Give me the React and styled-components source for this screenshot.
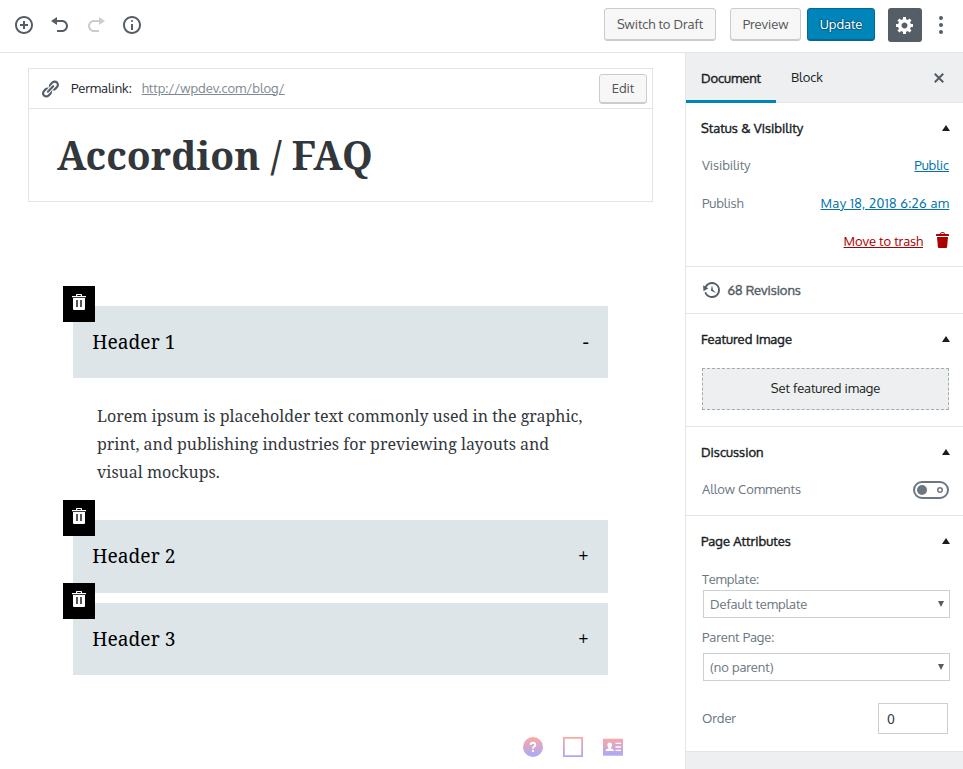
import React from "react";
import styled, { createGlobalStyle, css } from "styled-components";

const sans = `Oxygen, "Noto Sans", sans-serif`;
const serif = `"Noto Serif", "DejaVu Serif Condensed", serif`;

const GlobalStyle = createGlobalStyle`
  *, *::before, *::after { box-sizing: border-box; }
  html, body { margin: 0; padding: 0; background: #fff; }
  body { font-family: ${sans}; font-size: 13px; color: #555d66; letter-spacing: -0.07px; }
  button, input, select { font: inherit; letter-spacing: inherit; color: inherit; margin: 0; }
`;

const mediumText = css`
  font-weight: 400;
  -webkit-text-stroke: 0.4px currentColor;
`;

const Screen = styled.div`
  width: 963px;
  height: 769px;
  display: flex;
  flex-direction: column;
  overflow: hidden;
`;

const TopBar = styled.header`
  flex: none;
  height: 53px;
  border-bottom: 1px solid #e2e4e7;
  display: flex;
  justify-content: space-between;
  padding: 0 12px 0 14px;
`;

const Tools = styled.div`
  display: flex;
  gap: 16px;
  padding-top: 15px;
`;

const Actions = styled.div`
  display: flex;
  align-items: flex-start;
  padding-top: 8px;
`;

const IconButton = styled.button`
  display: flex;
  padding: 0;
  border: 0;
  background: none;
  width: 20px;
  height: 20px;
  color: ${p => (p.$muted ? "#cbced1" : "#555d66")};
`;

const Button = styled.button`
  width: ${p => p.$width}px;
  height: ${p => (p.$small ? 30 : 33)}px;
  margin-right: ${p => p.$gap || 0}px;
  padding: 0 0 2px;
  border-radius: 3px;
  white-space: nowrap;
  font-size: 13px;
  border: 1px solid ${p => (p.$primary ? "#006a95" : "#ccc")};
  background: ${p => (p.$primary ? "#0085ba" : "#f7f7f7")};
  color: ${p => (p.$primary ? "#fff" : "#555")};
  box-shadow: ${p => (p.$primary ? "inset 0 -1px 0 #006a95" : "inset 0 -1px 0 #ccc")};
  text-shadow: ${p => (p.$primary ? "0 -1px 1px #005d82, 1px 0 1px #005d82, 0 1px 1px #005d82, -1px 0 1px #005d82" : "none")};
`;

const SettingsButton = styled.button`
  width: 34px;
  height: 34px;
  margin-right: 9px;
  padding: 0;
  border: 0;
  border-radius: 3px;
  background: #555d66;
  color: #fff;
  display: flex;
  align-items: center;
  justify-content: center;
`;

const MoreButton = styled(IconButton)`
  height: 34px;
  align-items: center;
`;

const Workspace = styled.div`
  flex: 1;
  min-height: 0;
  display: flex;
`;

const Editor = styled.main`
  width: 685px;
  padding: 15px 32px 0 28px;
`;

const Permalink = styled.div`
  display: flex;
  align-items: center;
  height: 41px;
  border: 1px solid #e2e4e7;
  padding: 0 5px 0 11px;
  color: #23282d;
  svg { color: #555d66; margin-right: 11px; }
`;

const PermalinkLabel = styled.span`
  padding-bottom: 1px;
`;

const PermalinkUrl = styled.a`
  margin-left: 10px;
  padding-bottom: 1px;
  flex: 1;
  color: #7e8993;
  text-decoration: underline;
  letter-spacing: -0.04px;
`;

const TitleBox = styled.div`
  height: 93px;
  border: 1px solid #e2e4e7;
  border-top: 0;
  padding: 18px 28px;
`;

const Title = styled.h1`
  margin: 0;
  font: 700 39.06px/55px ${serif};
  letter-spacing: 0;
  color: #32373c;
`;

const Accordion = styled.div`
  margin: 103.85px 45px 0 45px;
  font-family: ${serif};
  letter-spacing: 0;
`;

const Section = styled.section`
  position: relative;
  margin-bottom: 10px;
`;

const SectionHeader = styled.div`
  height: 72.4px;
  padding: 0 19.3px;
  background: #dde5e8;
  color: #000;
  display: flex;
  align-items: center;
  justify-content: space-between;
  font-size: 19.2px;
  line-height: 34.5px;
`;

const RemoveButton = styled.button`
  position: absolute;
  left: -10px;
  top: -20px;
  width: 32px;
  height: 36px;
  padding: 8px 9px;
  border: 0;
  background: #000;
  color: #fff;
  display: flex;
`;

const SectionBody = styled.p`
  margin: 0;
  height: 132px;
  padding: 24px;
  font-size: 16px;
  line-height: 28px;
  color: #32373c;
`;

const Shortcuts = styled.div`
  display: flex;
  justify-content: flex-end;
  gap: 20px;
  margin-top: 61.95px;
  padding-right: 30px;
`;

const Sidebar = styled.aside`
  width: 278px;
  border-left: 1px solid #e2e4e7;
  background: #edeff0;
  color: #6c7781;
`;

const Tabs = styled.div`
  height: 50px;
  border-bottom: 1px solid #e2e4e7;
  display: flex;
  align-items: flex-start;
  padding-right: 14px;
`;

const Tab = styled.button`
  height: 50px;
  padding: ${p => (p.$active ? "3px" : "1px")} 15px 0;
  border: 0;
  border-bottom: 3px solid ${p => (p.$active ? "#0085ba" : "transparent")};
  background: none;
  color: #191e23;
  white-space: nowrap;
  ${p => p.$active && css`
    ${mediumText}
    width: 90px;
  `}
`;

const CloseButton = styled(IconButton)`
  margin: 15px 0 0 auto;
  color: #555d66;
`;

const Panel = styled.section`
  height: ${p => p.$height}px;
  border-bottom: 1px solid #e2e4e7;
  background: #fff;
  padding: 0 14px 0 16px;
`;

const PanelHeading = styled.h2`
  height: 50px;
  margin: 0 -1px;
  display: flex;
  align-items: center;
  justify-content: space-between;
  font-size: 13px;
  letter-spacing: 0.02px;
  ${mediumText}
  color: #191e23;
`;

const Row = styled.div`
  display: flex;
  align-items: center;
  justify-content: ${p => (p.$end ? "flex-end" : "space-between")};
  height: 24px;
  margin-bottom: 14px;
`;

const Link = styled.a`
  color: ${p => (p.$danger ? "#aa0000" : "#0073aa")};
  text-decoration: underline;
`;

const DateLink = styled(Link)`
  letter-spacing: 0.3px;
  margin-right: -0.3px;
`;

const TrashSlot = styled.span`
  display: flex;
  margin: -2px -4px 0 10px;
  color: #a00;
`;

const Revisions = styled.div`
  height: 46px;
  display: flex;
  align-items: center;
  gap: 5.5px;
  color: #555d66;
  ${mediumText}
`;

const FeaturedButton = styled.button`
  display: block;
  width: 247px;
  height: 42px;
  margin-top: 4px;
  padding: 0 0 2px;
  border: 1px dashed #a2aab2;
  background: #edeff0;
  color: #191e23;
`;

const Toggle = styled.span`
  width: 36px;
  height: 18px;
  margin-top: 1px;
  border: 2px solid #6c7781;
  border-radius: 9px;
  display: flex;
  align-items: center;
  justify-content: space-between;
  padding: 0 4px 0 2px;
`;

const Knob = styled.span`
  width: 10px;
  height: 10px;
  border-radius: 50%;
  background: #6c7781;
`;

const Label = styled.div`
  height: 20px;
  line-height: 20px;
  margin-top: ${p => p.$top}px;
  margin-bottom: ${p => p.$bottom}px;
`;

const SelectBox = styled.div`
  width: 247px;
  height: 28px;
  margin-left: 1px;
  padding: 0 5px 0 6px;
  border: 1px solid #ccd0d4;
  display: flex;
  align-items: center;
  justify-content: space-between;
`;

const OrderRow = styled(Row)`
  margin-top: 22px;
  height: 31px;
  padding-right: 1px;
`;

const OrderLabel = styled.span`
  padding-bottom: 2px;
`;

const OrderInput = styled.input`
  width: 70px;
  height: 31px;
  border: 1px solid #ccd0d4;
  padding: 0 8px;
  color: #32373c;
  background: #fff;
`;

const paths = {
  insert: "M10 1c-5 0-9 4-9 9s4 9 9 9 9-4 9-9-4-9-9-9zm0 16c-3.900 0-7-3.100-7-7s3.100-7 7-7 7 3.100 7 7-3.100 7-7 7zm1-11H9v3H6v2h3v3h2v-3h3V9h-3V6z",
  undo: "M12 5H7V2L1 6l6 4V7h5c2.200 0 4 1.800 4 4s-1.800 4-4 4H7v2h5c3.300 0 6-2.700 6-6s-2.700-6-6-6z",
  redo: "M8 5h5V2l6 4-6 4V7H8c-2.200 0-4 1.800-4 4s1.800 4 4 4h5v2H8c-3.300 0-6-2.700-6-6s2.700-6 6-6z",
  info: "M9 15h2V9H9v6zm1-10c-.5 0-1 .5-1 1s.5 1 1 1 1-.5 1-1-.5-1-1-1zm0-4c-5 0-9 4-9 9s4 9 9 9 9-4 9-9-4-9-9-9zm0 16c-3.900 0-7-3.100-7-7s3.100-7 7-7 7 3.100 7 7-3.100 7-7 7z",
  link: "M17.74 2.76c1.68 1.69 1.68 4.41 0 6.1l-1.53 1.52c-1.12 1.12-2.7 1.47-4.14 1.09l2.62-2.61.76-.77.76-.76c.84-.84.84-2.2 0-3.04-.84-.85-2.2-.85-3.04 0l-.77.76-3.38 3.38c-.37-1.44-.02-3.02 1.1-4.14l1.52-1.53c1.69-1.68 4.42-1.68 6.1 0zM8.59 13.43l5.34-5.34c.42-.42.42-1.1 0-1.52-.44-.43-1.13-.39-1.53 0l-5.33 5.34c-.42.42-.42 1.1 0 1.52.44.43 1.13.39 1.52 0zm-.76 2.29l4.14-4.15c.38 1.44.03 3.02-1.09 4.14l-1.52 1.53c-1.69 1.68-4.41 1.68-6.1 0-1.68-1.68-1.68-4.42 0-6.1l1.53-1.52c1.12-1.12 2.7-1.47 4.14-1.1l-4.14 4.15c-.85.84-.85 2.2 0 3.05.84.84 2.2.84 3.04 0z",
  gear: "M18 12h-2.18c-.17.7-.44 1.35-.81 1.93l1.54 1.54-2.1 2.1-1.54-1.54c-.58.36-1.23.63-1.91.79V19H8v-2.18c-.68-.16-1.33-.43-1.91-.79l-1.54 1.54-2.12-2.12 1.54-1.54c-.36-.58-.63-1.23-.79-1.91H1V9.03h2.17c.16-.7.44-1.35.8-1.94L2.43 5.55l2.1-2.1 1.54 1.54c.58-.37 1.24-.64 1.93-.81V2h3v2.18c.68.16 1.33.43 1.91.79l1.54-1.54 2.12 2.12-1.54 1.54c.36.59.64 1.24.8 1.94H18V12zm-8.5 1.5c1.66 0 3-1.34 3-3s-1.34-3-3-3-3 1.34-3 3 1.34 3 3 3z",
  more: "M10 1a2 2 0 1 0 0 4 2 2 0 0 0 0-4zm0 7a2 2 0 1 0 0 4 2 2 0 0 0 0-4zm0 7a2 2 0 1 0 0 4 2 2 0 0 0 0-4z",
  close: "M14.95 6.46L11.41 10l3.54 3.54-1.41 1.41L10 11.42l-3.53 3.53-1.42-1.42L8.58 10 5.05 6.47l1.42-1.42L10 8.58l3.54-3.53z",
  trash: "M12 4h3c.6 0 1 .4 1 1v1H3V5c0-.6.5-1 1-1h3c.2-1.1 1.3-2 2.500-2s2.300.9 2.500 2zM8 4h3c-.2-.6-.9-1-1.500-1S8.200 3.400 8 4zM4 7h11l-.9 10.100c0 .5-.5.9-1 .9H5.900c-.5 0-.9-.4-1-.9L4 7z",
  backup: "M13.65 2.88c3.93 2.01 5.48 6.84 3.47 10.77s-6.83 5.48-10.77 3.47c-1.87-.96-3.2-2.56-3.86-4.4l1.64-1.03c.45 1.57 1.52 2.95 3.08 3.76 3.01 1.54 6.69.35 8.23-2.66 1.55-3.01.36-6.69-2.65-8.24C9.78 3.01 6.1 4.2 4.56 7.21l1.88.97-4.95 3.08-.39-5.82 1.78.91C4.9 2.4 9.75.89 13.65 2.88zm-4.36 7.83C9.11 10.53 9 10.28 9 10c0-.07.03-.12.04-.19h-.01L10 5l.97 4.81L14 13l-4.5-2.12.02-.02c-.08-.04-.16-.09-.23-.15z",
};

const Icon = ({ name, size = 20 }) => (
  <svg width={size} height={size} viewBox="0 0 20 20" fill="currentColor" aria-hidden="true">
    <path d={paths[name]} />
  </svg>
);

const CaretUp = () => (
  <svg width="8" height="6" viewBox="0 0 8 6" aria-hidden="true">
    <path d="M4 0L8 6H0z" fill="#191e23" />
  </svg>
);

const CaretDown = () => (
  <svg width="6" height="6" viewBox="0 0 6 6" aria-hidden="true">
    <path d="M0 0h6L3 6z" fill="#555d66" />
  </svg>
);

const OffMark = () => (
  <svg width="6" height="6" viewBox="0 0 6 6" aria-hidden="true">
    <circle cx="3" cy="3" r="2.250" fill="none" stroke="#6c7781" strokeWidth="1.500" />
  </svg>
);

const BinIcon = () => (
  <svg width="14" height="16" viewBox="0 0 14 16" aria-hidden="true">
    <path d="M4 2V.8Q4 0 4.800 0h4.400Q10 0 10 .8V2h4v1.300H0V2zM5.200 1.100V2h3.600v-.9z" fill="#fff" fillRule="evenodd" />
    <path d="M1 4h12v11q0 1-1 1H2q-1 0-1-1z" fill="#fff" />
    <path d="M4 6h2v7H4zM8 6h2v7H8z" fill="#555" />
  </svg>
);

const Shade = ({ id }) => (
  <defs>
    <linearGradient id={id} x1="0" y1="0" x2="0" y2="20" gradientUnits="userSpaceOnUse">
      <stop offset="0" stopColor="#ffa8a0" />
      <stop offset="1" stopColor="#a8a8ff" />
    </linearGradient>
  </defs>
);

const HelpIcon = () => (
  <svg width="20" height="20" viewBox="0 0 20 20" aria-label="Help">
    <Shade id="help" />
    <circle cx="10" cy="10" r="10" fill="url(#help)" />
    <path d="M7.600 7.800Q7.800 5.800 10 5.800T12.300 7.900Q12.300 9 11 9.800T10 11.800" fill="none" stroke="#fff" strokeWidth="1.900" />
    <path d="M9 13h2v2H9z" fill="#fff" />
  </svg>
);

const SquareIcon = () => (
  <svg width="20" height="20" viewBox="0 0 20 20" aria-label="Container">
    <Shade id="square" />
    <path d="M0 0h20v20H0zM1.800 1.800v16.400h16.400V1.800z" fill="url(#square)" fillRule="evenodd" />
  </svg>
);

const CardIcon = () => (
  <svg width="20" height="20" viewBox="0 0 20 20" aria-label="Profile card">
    <Shade id="card" />
    <path d="M0 1.700h20v17H0z" fill="url(#card)" />
    <path d="M6.700 5.500c1.500 0 2.300 1 2.300 2.500 0 1.300-.5 2-.9 2.600v.8c1 .4 2.700.8 2.900 2.600H2.500c.2-1.800 1.800-2.200 2.900-2.600v-.8C5 10 4.400 9.300 4.400 8c0-1.500.8-2.500 2.300-2.500z" fill="#fff" />
    <path d="M12.500 5.800H18v1.300h-5.500zM12.500 9.300H18v1.400h-5.500zM12.500 12.800H18v1.300h-5.500z" fill="#fff" />
  </svg>
);

const AccordionItem = ({ title, open, children }) => (
  <Section>
    <SectionHeader>
      <span>{title}</span>
      <span>{open ? "-" : "+"}</span>
    </SectionHeader>
    <RemoveButton aria-label={`Remove ${title}`}><BinIcon /></RemoveButton>
    {open && <SectionBody>{children}</SectionBody>}
  </Section>
);

const Heading = ({ children }) => (
  <PanelHeading><span>{children}</span><CaretUp /></PanelHeading>
);

export default function App() {
  return (
    <Screen>
      <GlobalStyle />
      <TopBar>
        <Tools>
          <IconButton aria-label="Add block"><Icon name="insert" /></IconButton>
          <IconButton aria-label="Undo"><Icon name="undo" /></IconButton>
          <IconButton aria-label="Redo" $muted><Icon name="redo" /></IconButton>
          <IconButton aria-label="Content structure"><Icon name="info" /></IconButton>
        </Tools>
        <Actions>
          <Button $width={112} $gap={14}>Switch to Draft</Button>
          <Button $width={71} $gap={6}>Preview</Button>
          <Button $width={68} $gap={13} $primary>Update</Button>
          <SettingsButton aria-label="Settings"><Icon name="gear" /></SettingsButton>
          <MoreButton aria-label="More"><Icon name="more" /></MoreButton>
        </Actions>
      </TopBar>
      <Workspace>
        <Editor>
          <Permalink>
            <Icon name="link" />
            <PermalinkLabel>Permalink:</PermalinkLabel>
            <PermalinkUrl>http://wpdev.com/blog/</PermalinkUrl>
            <Button $width={48} $small>Edit</Button>
          </Permalink>
          <TitleBox><Title>Accordion / FAQ</Title></TitleBox>
          <Accordion>
            <AccordionItem title="Header 1" open>
              Lorem ipsum is placeholder text commonly used in the graphic, print, and publishing
              industries for previewing layouts and visual mockups.
            </AccordionItem>
            <AccordionItem title="Header 2" />
            <AccordionItem title="Header 3" />
          </Accordion>
          <Shortcuts><HelpIcon /><SquareIcon /><CardIcon /></Shortcuts>
        </Editor>
        <Sidebar>
          <Tabs>
            <Tab $active>Document</Tab>
            <Tab>Block</Tab>
            <CloseButton aria-label="Close settings"><Icon name="close" /></CloseButton>
          </Tabs>
          <Panel $height={164}>
            <Heading>Status &amp; Visibility</Heading>
            <Row><span>Visibility</span><Link>Public</Link></Row>
            <Row><span>Publish</span><DateLink>May 18, 2018 6:26 am</DateLink></Row>
            <Row $end><Link $danger>Move to trash</Link><TrashSlot><Icon name="trash" /></TrashSlot></Row>
          </Panel>
          <Panel $height={47}>
            <Revisions><Icon name="backup" />68 Revisions</Revisions>
          </Panel>
          <Panel $height={113}>
            <Heading>Featured Image</Heading>
            <FeaturedButton>Set featured image</FeaturedButton>
          </Panel>
          <Panel $height={89}>
            <Heading>Discussion</Heading>
            <Row><span>Allow Comments</span><Toggle><Knob /><OffMark /></Toggle></Row>
          </Panel>
          <Panel $height={236}>
            <Heading>Page Attributes</Heading>
            <Label $top={3} $bottom={1}>Template:</Label>
            <SelectBox><span>Default template</span><CaretDown /></SelectBox>
            <Label $top={9} $bottom={6}>Parent Page:</Label>
            <SelectBox><span>(no parent)</span><CaretDown /></SelectBox>
            <OrderRow><OrderLabel>Order</OrderLabel><OrderInput defaultValue="0" aria-label="Order" /></OrderRow>
          </Panel>
        </Sidebar>
      </Workspace>
    </Screen>
  );
}
